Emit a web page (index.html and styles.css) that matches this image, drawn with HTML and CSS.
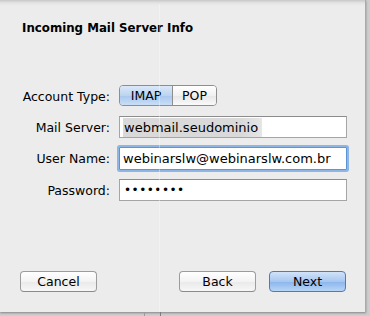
FILE: index.html
```html
<!DOCTYPE html>
<html lang="en">
<head>
    <meta charset="UTF-8">
    <title>Incoming Mail Server Info</title>
    <link rel="stylesheet" href="styles.css">
</head>
<body>
    <div class="window">
        <h1>Incoming Mail Server Info</h1>

        <div class="form">
            <label>Account Type:</label>
            <div class="segmented">
                <span class="seg selected">IMAP</span>
                <span class="seg">POP</span>
            </div>

            <label>Mail Server:</label>
            <div class="field"><span class="hl">webmail.seudominio</span></div>

            <label>User Name:</label>
            <div class="field focused">webinarslw@webinarslw.com.br</div>

            <label>Password:</label>
            <div class="field dots">&#8226;&#8226;&#8226;&#8226;&#8226;&#8226;&#8226;&#8226;</div>
        </div>

        <div class="buttons">
            <button class="btn">Cancel</button>
            <div class="right">
                <button class="btn">Back</button>
                <button class="btn primary">Next</button>
            </div>
        </div>
    </div>
    <div class="below">
        <span class="tick"></span>
    </div>
</body>
</html>
```

FILE: styles.css
```css
body {
    margin: 0;
    background-color: #cdcdcd;
    font-family: "DejaVu Sans", "Liberation Sans", sans-serif;
    font-size: 12px;
    color: #000;
    width: 370px;
    height: 316px;
    overflow: hidden;
}
.window {
    width: 366px;
    height: 312px;
    background: linear-gradient(to bottom, #c8c8c8 0px, #e4e4e4 3px, #ececec 6px);
    border-right: 1px solid #a9a9a9;
    box-shadow: 0 1px 2px rgba(0,0,0,0.35);
    position: relative;
    box-sizing: border-box;
    padding-top: 21px;
    display: flex;
    flex-direction: column;
}
.window::after {
    content: "";
    position: absolute;
    left: 159px;
    top: 4px;
    bottom: 0;
    width: 1px;
    background-color: rgba(255,255,255,0.35);
}
h1 {
    font-size: 11.8px;
    font-weight: bold;
    margin: 0 0 0 22px;
    line-height: 15px;
}
.form {
    margin-top: 49px;
    display: grid;
    grid-template-columns: 110px 228px;
    column-gap: 9px;
    row-gap: 9px;
    align-items: center;
}
.form label {
    text-align: right;
    font-size: 12.5px;
}
.segmented {
    display: flex;
    width: 98px;
    height: 21px;
    border: 1px solid #8e8e8e;
    border-radius: 4px;
    box-sizing: border-box;
    overflow: hidden;
    margin-bottom: 1px;
}
.seg {
    flex: 1;
    display: flex;
    align-items: center;
    justify-content: center;
    font-size: 12.5px;
    background: linear-gradient(to bottom, #ffffff, #f1f1f1 50%, #e6e6e6 51%, #fafafa);
}
.seg.selected {
    flex: 0 0 52px;
    border-right: 1px solid #8e8e8e;
    background: linear-gradient(to bottom, #dbe8f8, #bcd4f1 50%, #a9c7ee 51%, #c9def7);
}
.field {
    height: 22px;
    box-sizing: border-box;
    border: 1px solid #a5a5a5;
    border-top-color: #8c8c8c;
    background-color: #fff;
    padding: 0 3px;
    display: flex;
    align-items: center;
    font-size: 13px;
    white-space: nowrap;
}
.hl {
    background: linear-gradient(to right, #d9d9d9 85%, #e6e6e6);
    padding: 2px 4px 2px 1px;
}
.field.focused {
    height: 23px;
    border: 1px solid #5e93d4;
    box-shadow: 0 0 0 2px #8db6e6;
    border-radius: 1px;
}
.field.dots {
    font-size: 12px;
    letter-spacing: 0.5px;
    padding-left: 4px;
}
.buttons {
    margin-top: auto;
    margin-bottom: 20px;
    display: flex;
    justify-content: space-between;
    padding: 0 19px 0 20px;
}
.right {
    display: flex;
    gap: 13px;
}
.btn {
    width: 77px;
    height: 21px;
    font-family: inherit;
    font-size: 12.5px;
    color: #000;
    border: 1px solid #9c9c9c;
    border-bottom-color: #8a8a8a;
    border-radius: 4px;
    background: linear-gradient(to bottom, #ffffff, #f3f3f3 50%, #e9e9e9 51%, #f7f7f7);
    padding: 0;
}
.btn.primary {
    border-color: #5b79a8;
    background: linear-gradient(to bottom, #d2e3f9, #a7c7f0 50%, #8ab5ec 51%, #b8d5f6);
}
.below {
    position: relative;
    height: 4px;
}
.tick {
    position: absolute;
    left: 144px;
    top: 0;
    width: 15px;
    height: 4px;
    border-left: 1px solid #9a9a9a;
    border-right: 1px solid #7c7c7c;
}
```
